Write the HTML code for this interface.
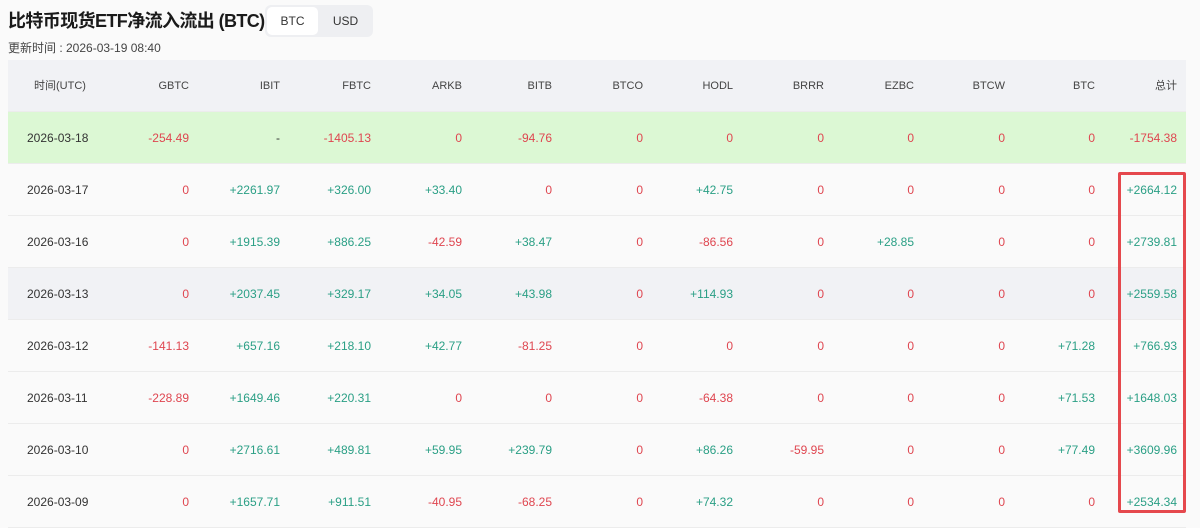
<!DOCTYPE html>
<html><head><meta charset="utf-8"><style>
body{margin:0;width:1200px;height:518px;overflow:hidden;background:#fafafa;font-family:"Liberation Sans","Noto Sans CJK SC",sans-serif;color:#333;position:relative}
.t{position:absolute;left:8px;top:7px;font-size:18px;letter-spacing:-0.6px;font-weight:bold;color:#1a1a1a;white-space:nowrap}
.seg{position:absolute;left:265px;top:5px;width:108px;height:32px;background:#eeeff2;border-radius:6px}
.seg div{position:absolute;top:2px;height:28px;line-height:28px;font-size:12px;text-align:center}
.u{position:absolute;left:8px;top:39px;font-size:12px;color:#444}
.row{position:absolute;left:8px;width:1178px;height:52px;border-bottom:1px solid #ececec;box-sizing:border-box}
.c{position:absolute;top:0;line-height:52px;font-size:12px;text-align:right;width:90px}
.r{color:#df4650}.g{color:#2a9f85}
.box{position:absolute;left:1118px;top:172px;width:68px;height:341px;border:3px solid #e5484d;box-sizing:border-box;border-radius:2px}
</style></head><body>
<div class="t">比特币现货ETF净流入流出 (BTC)</div>
<div class="seg"><div style="left:2px;width:51px;background:#fff;border-radius:5px">BTC</div><div style="left:55px;width:51px">USD</div></div>
<div class="u">更新时间 : 2026-03-19 08:40</div>
<div id="t"></div>
<div class="box"></div>
<script>
var R=[189,280,371,462,552,643,733,824,914,1005,1095,1177];
var rows=[
["时间(UTC)","GBTC","IBIT","FBTC","ARKB","BITB","BTCO","HODL","BRRR","EZBC","BTCW","BTC","总计"],
["2026-03-18","-254.49","-","-1405.13","0","-94.76","0","0","0","0","0","0","-1754.38"],
["2026-03-17","0","+2261.97","+326.00","+33.40","0","0","+42.75","0","0","0","0","+2664.12"],
["2026-03-16","0","+1915.39","+886.25","-42.59","+38.47","0","-86.56","0","+28.85","0","0","+2739.81"],
["2026-03-13","0","+2037.45","+329.17","+34.05","+43.98","0","+114.93","0","0","0","0","+2559.58"],
["2026-03-12","-141.13","+657.16","+218.10","+42.77","-81.25","0","0","0","0","0","+71.28","+766.93"],
["2026-03-11","-228.89","+1649.46","+220.31","0","0","0","-64.38","0","0","0","+71.53","+1648.03"],
["2026-03-10","0","+2716.61","+489.81","+59.95","+239.79","0","+86.26","-59.95","0","0","+77.49","+3609.96"],
["2026-03-09","0","+1657.71","+911.51","-40.95","-68.25","0","+74.32","0","0","0","0","+2534.34"]];
var h="";
rows.forEach(function(r,i){
 var bg=i==0||i==4?"#f1f2f5":(i==1?"#dcf8d4":"#fafafa");
 h+='<div class="row" style="top:'+(60+52*i)+'px;background:'+bg+'">';
 h+='<div class="c" style="left:'+(i==0?26:19)+'px;text-align:left;color:'+(i==0?'#444':'#333')+';'+(i==0?'font-size:11px':'')+'">'+r[0]+'</div>';
 for(var j=1;j<13;j++){var v=r[j],cl="";
  if(i>0){cl=(v[0]=="+")?"g":(v=="-"?"":"r");}
  h+='<div class="c '+cl+'" style="left:'+(R[j-1]-8-90)+'px;'+(i==0?'font-size:11px;color:#444':'')+'">'+v+'</div>';}
 h+='</div>';});
document.getElementById("t").innerHTML=h;
</script>
</body></html>
